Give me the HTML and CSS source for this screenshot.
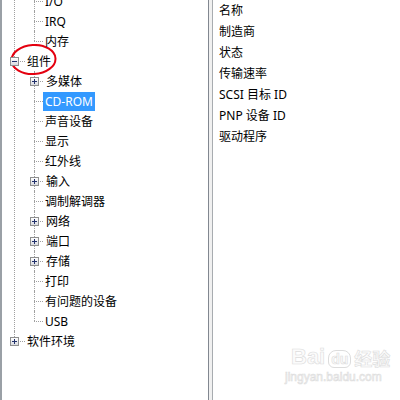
FILE: index.html
```html
<!DOCTYPE html>
<html lang="zh-CN">
<head>
<meta charset="utf-8">
<title>设备信息</title>
<link rel="stylesheet" href="styles.css">
</head>
<body>
<div class="window">
  <div class="left">
    <ul class="tree l1">
      <li class="node">
        <ul class="l2">
          <li><div class="row leaf"><span class="label">I/O</span></div></li>
          <li><div class="row leaf"><span class="label">IRQ</span></div></li>
          <li class="last"><div class="row leaf"><span class="label">内存</span></div></li>
        </ul>
      </li>
      <li class="node">
        <div class="row"><span class="box minus"></span><span class="label">组件</span></div>
        <ul class="l2">
          <li><div class="row"><span class="box plus"></span><span class="label">多媒体</span></div></li>
          <li><div class="row leaf"><span class="label selected">CD-ROM</span></div></li>
          <li><div class="row leaf"><span class="label">声音设备</span></div></li>
          <li><div class="row leaf"><span class="label">显示</span></div></li>
          <li><div class="row leaf"><span class="label">红外线</span></div></li>
          <li><div class="row"><span class="box plus"></span><span class="label">输入</span></div></li>
          <li><div class="row leaf"><span class="label">调制解调器</span></div></li>
          <li><div class="row"><span class="box plus"></span><span class="label">网络</span></div></li>
          <li><div class="row"><span class="box plus"></span><span class="label">端口</span></div></li>
          <li><div class="row"><span class="box plus"></span><span class="label">存储</span></div></li>
          <li><div class="row leaf"><span class="label">打印</span></div></li>
          <li><div class="row leaf"><span class="label">有问题的设备</span></div></li>
          <li class="last"><div class="row leaf"><span class="label">USB</span></div></li>
        </ul>
      </li>
      <li class="node last">
        <div class="row"><span class="box plus"></span><span class="label">软件环境</span></div>
      </li>
    </ul>
    <svg class="circle" width="50" height="36" viewBox="0 0 50 36" aria-hidden="true">
      <ellipse cx="23.5" cy="15.5" rx="22" ry="14.5" fill="none" stroke="#e4000f" stroke-width="2" transform="rotate(-3 23.5 15.5)"/>
    </svg>
  </div>
  <div class="splitter"></div>
  <div class="right">
    <ul class="props">
      <li>名称</li>
      <li>制造商</li>
      <li>状态</li>
      <li>传输速率</li>
      <li>SCSI 目标 ID</li>
      <li>PNP 设备 ID</li>
      <li>驱动程序</li>
    </ul>
    <div class="watermark">
      <div class="wm-logo"><span class="wm-bai">Bai</span><span class="wm-du">du</span><span class="wm-jy">经验</span></div>
      <div class="wm-url">jingyan.baidu.com</div>
    </div>
  </div>
</div>
</body>
</html>
```

FILE: styles.css
```css
html, body {
  margin: 0;
  padding: 0;
  background: #ffffff;
}

body {
  width: 400px;
  height: 400px;
  overflow: hidden;
  font-family: "Noto Sans", "Noto Sans CJK SC", sans-serif;
  font-size: 12px;
  color: #000000;
}

.window {
  display: flex;
  height: 400px;
}

.left {
  position: relative;
  width: 206px;
  flex: none;
  border-left: 2px solid #9aa0a6;
  overflow: hidden;
}

.splitter {
  width: 3px;
  flex: none;
  background: #f0f0f0;
  border-left: 1px solid #828790;
  border-right: 1px solid #a8acb0;
}

.right {
  position: relative;
  flex: 1;
  overflow: hidden;
}

ul {
  list-style: none;
  margin: 0;
  padding: 0;
}

.tree {
  margin-top: -9px;
}

.tree li {
  position: relative;
}

/* vertical connector lines */
.tree li::before {
  content: "";
  position: absolute;
  top: 0;
  bottom: 0;
  border-left: 1px dotted #a0a0a0;
}

.tree li.last::before {
  bottom: auto;
  height: 10px;
}

.l1 > li::before {
  left: 12px;
}

.l2 > li::before {
  left: 32px;
}

.row {
  position: relative;
  display: flex;
  align-items: center;
  height: 20px;
  white-space: nowrap;
}

/* horizontal connector lines */
.row::before {
  content: "";
  position: absolute;
  top: 10px;
  border-top: 1px dotted #a0a0a0;
}

.l1 > li > .row {
  padding-left: 8px;
}

.l1 > li > .row::before {
  left: 12px;
  width: 11px;
}

.l1 > li > .row .label {
  margin-left: 6px;
}

.l2 > li > .row {
  padding-left: 28px;
}

.l2 > li > .row::before {
  left: 32px;
  width: 9px;
}

.l2 > li > .row .label {
  margin-left: 5px;
}

.l2 > li > .row.leaf .label {
  margin-left: 13px;
}

.box {
  position: relative;
  z-index: 1;
  width: 7px;
  height: 7px;
  flex: none;
  border: 1px solid #8e8f8f;
  background: linear-gradient(#ffffff, #d9dbe0);
}

.box::before,
.box::after {
  content: "";
  position: absolute;
  background: #22316b;
}

.box::before {
  left: 1px;
  top: 3px;
  width: 5px;
  height: 1px;
}

.box.plus::after {
  left: 3px;
  top: 1px;
  width: 1px;
  height: 5px;
}

.label {
  position: relative;
  z-index: 1;
  display: block;
  height: 19px;
  line-height: 19px;
  padding: 0 2px;
}

.label.selected {
  background: #3399ff;
  color: #ffffff;
}

.circle {
  position: absolute;
  left: 8px;
  top: 44px;
}

.props {
  padding-left: 6px;
}

.props li {
  height: 21px;
  line-height: 21px;
  white-space: nowrap;
}

.watermark {
  position: absolute;
  left: 78px;
  top: 344px;
  color: #fbfbfb;
  -webkit-text-stroke: 0.6px #dcdcdc;
  font-family: "Liberation Sans", sans-serif;
}

.wm-logo {
  display: flex;
  align-items: flex-end;
  height: 24px;
}

.wm-bai {
  font-size: 22px;
  font-weight: bold;
  line-height: 22px;
}

.wm-du {
  font-size: 14px;
  font-weight: bold;
  line-height: 16px;
  margin: 0 3px;
  padding: 0 2px;
  border: 1px solid #dcdcdc;
  border-radius: 8px 8px 6px 6px;
}

.wm-jy {
  font-family: "Noto Sans CJK SC", sans-serif;
  font-size: 18px;
  font-weight: bold;
  line-height: 20px;
}

.wm-url {
  font-size: 12px;
  line-height: 18px;
  margin-left: -6px;
}
```
